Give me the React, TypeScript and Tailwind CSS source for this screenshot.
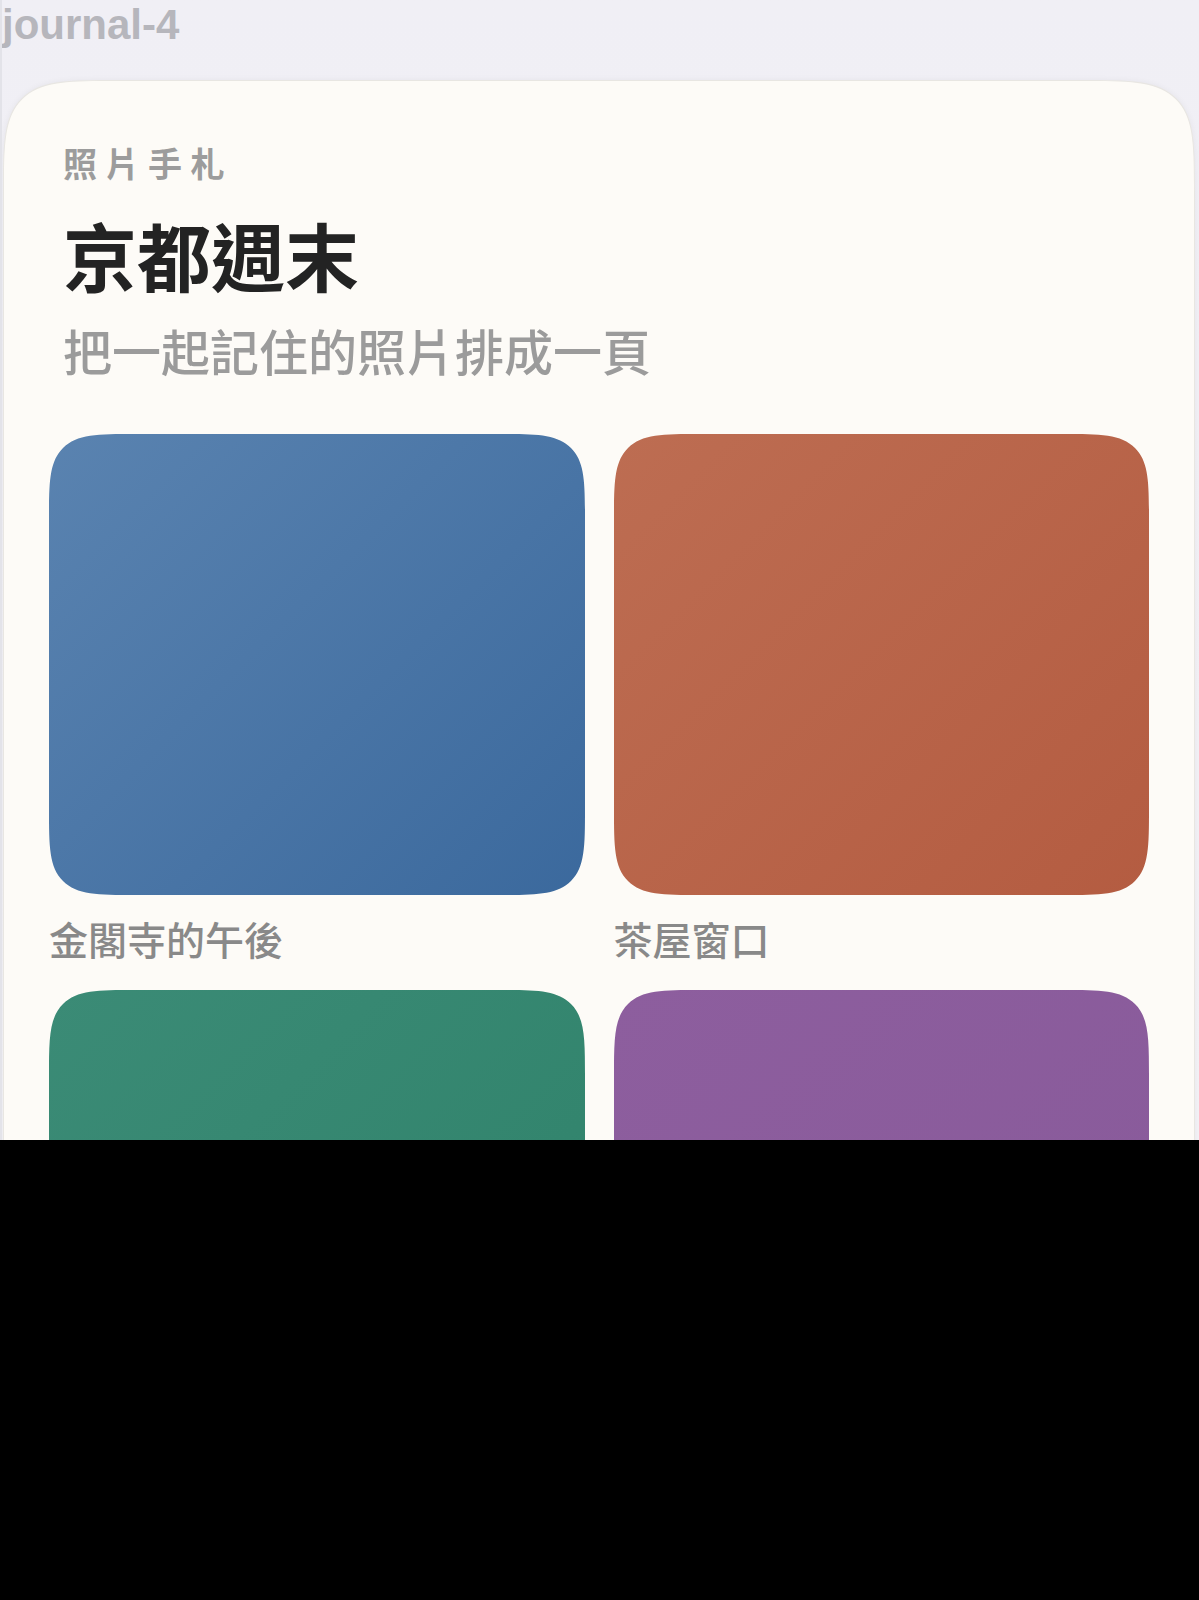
import React from 'react';

type Photo = {
  title?: string;
  from: string;
  to: string;
};

// second row captions sit below the fold in the reference
const photos: Photo[] = [
  { title: '金閣寺的午後', from: '#5a83b0', to: '#3b699d' },
  { title: '茶屋窗口', from: '#bd6d52', to: '#b45c41' },
  { from: '#3b8b76', to: '#2f826a' },
  { from: '#8d5e9e', to: '#885a9a' },
];

const cjk = '"Noto Sans CJK TC", "Noto Sans", sans-serif';

const PhotoTile: React.FC<{ photo: Photo }> = ({ photo }) => (
  <div className="flex flex-col">
    <div
      className="h-[461px] w-full rounded-[88px] [corner-shape:squircle]"
      style={{ backgroundImage: `linear-gradient(135deg, ${photo.from}, ${photo.to})` }}
    ></div>
    {photo.title && (
      <p className="mt-[20px] text-[39px] font-medium leading-[1.2] text-[#898989]">{photo.title}</p>
    )}
  </div>
);

const App: React.FC = () => {
  return (
    <div className="h-[1600px] w-full bg-black">
      <div
        className="h-[1140px] w-full overflow-hidden border-l-2 border-[#e3e3e9] bg-gradient-to-b from-[#f0eff5] to-[#f3f2f6]"
        style={{ fontFamily: cjk }}
      >
        {/* Page label */}
        <div
          className="h-[80px] pt-[1px] text-[42px] font-bold leading-[48px] text-[#b6b6bc]"
          style={{ fontFamily: '"Liberation Sans", Arial, sans-serif' }}
        >
          journal-4
        </div>

        {/* Journal card */}
        <div className="ml-[1px] mr-[4px] min-h-[1200px] rounded-[116px] border border-[#e8e6e2] bg-[#fdfbf7] px-[45px] pt-[62px] shadow-[0_0_6px_rgba(0,0,0,0.05)] [corner-shape:squircle]">
          <header className="px-[14px]">
            <p className="text-[34px] font-bold leading-[1.2] tracking-[0.25em] text-[#9c9c9c]">照片手札</p>
            <h1 className="mt-[26px] text-[74px] font-bold leading-[1.2] text-[#232323]">京都週末</h1>
            <p className="mt-[22px] text-[49px] font-medium leading-[1.2] text-[#9b9b9b]">把一起記住的照片排成一頁</p>
          </header>

          <div className="mt-[55px] grid grid-cols-2 gap-x-[29px] gap-y-[28px]">
            {photos.map((p, i) => (
              <PhotoTile key={i} photo={p} />
            ))}
          </div>
        </div>
      </div>
    </div>
  );
};

export default App;
